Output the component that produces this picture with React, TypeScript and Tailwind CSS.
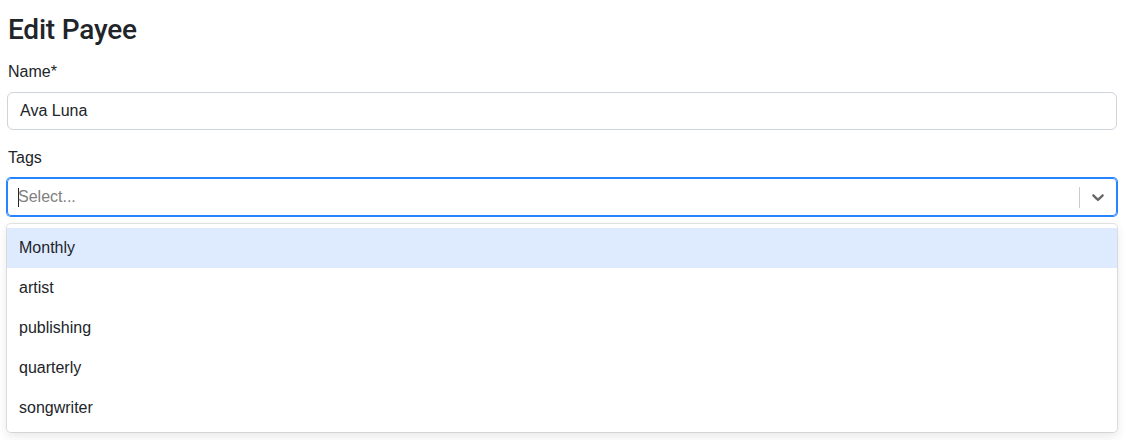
import React from "react";

const options = ["Monthly", "artist", "publishing", "quarterly", "songwriter"];

export default function App() {
  return (
    <div
      className="min-h-[440px] bg-white pl-[7px] pr-[9px] pt-[13px] text-[#212529]"
      style={{ fontFamily: '"Liberation Sans", Arial, sans-serif' }}
    >
      <h1
        className="ml-px mb-[13px] text-[28px] font-medium leading-[34px] tracking-[-0.2px]"
        style={{ fontFamily: 'Roboto, "Liberation Sans", sans-serif' }}
      >
        Edit Payee
      </h1>

      <div className="mb-4">
        <label className="ml-px mb-2 block text-base leading-6">Name*</label>
        <div className="flex h-[38px] items-center rounded-[6px] border border-[#ced4da] px-3 text-base leading-6">
          Ava Luna
        </div>
      </div>

      <div>
        <label className="ml-px mb-2 block text-base leading-6">Tags</label>
        <div className="relative">
          <div className="flex h-[38px] items-center rounded-[4px] border border-[#2684FF] shadow-[0_0_0_1px_#2684FF]">
            <div className="flex flex-1 items-center pl-[10px] text-base leading-6">
              <span className="h-[19px] w-px bg-[#212529]" />
              <span className="-ml-px text-[#808080]">Select...</span>
            </div>
            <span className="h-[21px] w-px bg-[#cccccc]" />
            <div className="flex w-9 items-center justify-center text-[#666666]">
              <svg width="20" height="20" viewBox="0 0 20 20" fill="currentColor">
                <path d="M4.516 7.548c0.436-0.446 1.043-0.481 1.576 0l3.908 3.747 3.908-3.747c0.533-0.481 1.141-0.446 1.574 0 0.436 0.445 0.408 1.197 0 1.615-0.406 0.418-4.695 4.502-4.695 4.502-0.217 0.223-0.502 0.335-0.787 0.335s-0.57-0.112-0.789-0.335c0 0-4.287-4.084-4.695-4.502s-0.436-1.17 0-1.615z" />
              </svg>
            </div>
          </div>

          <div className="absolute left-0 right-0 top-[46px] rounded-[4px] bg-white py-1 shadow-[0_0_0_1px_rgba(0,0,0,0.1),0_4px_11px_rgba(0,0,0,0.1)]">
            {options.map((o, i) => (
              <div
                key={o}
                className={
                  "px-3 py-2 text-base leading-6 " + (i === 0 ? "bg-[#DEEBFF]" : "bg-white")
                }
              >
                {o}
              </div>
            ))}
          </div>
        </div>
      </div>
    </div>
  );
}
